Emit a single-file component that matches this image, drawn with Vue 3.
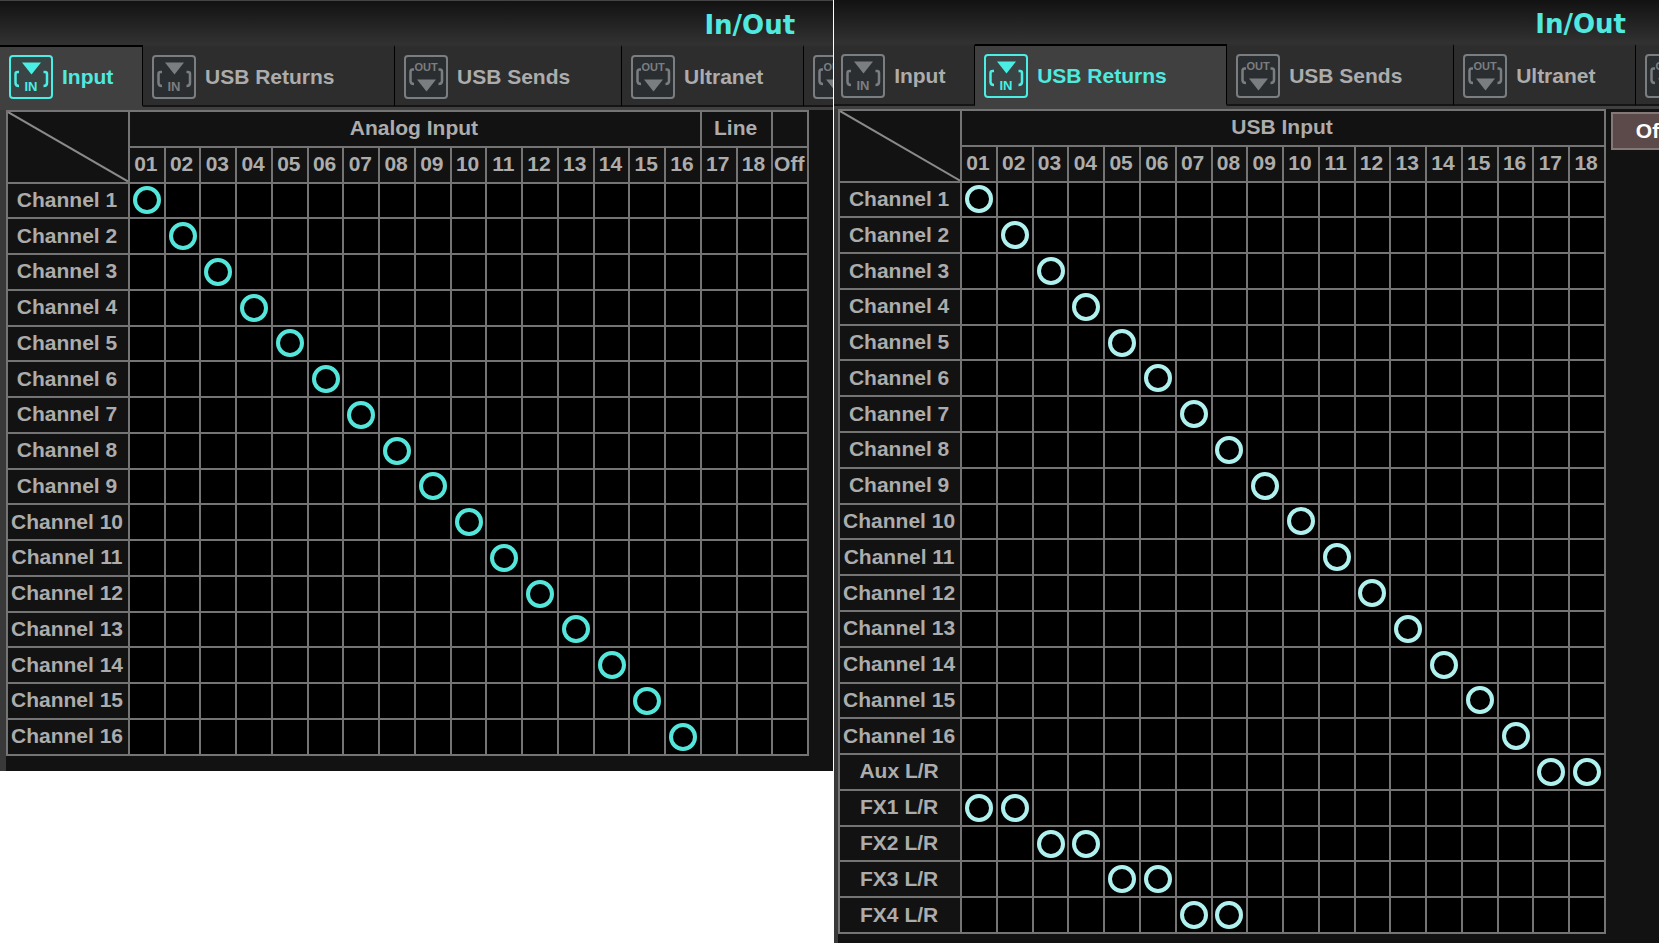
<template>
    <main class="page">
        <section v-for="panel in panels" :key="panel.id" :class="['panel', panel.id]" :aria-label="panel.name">
            <header class="panel-header">
                <h1>In/Out</h1>
            </header>

            <nav class="tabs" role="tablist" aria-label="In/Out pages">
                <button v-for="tab in tabs" :key="tab.id" type="button" role="tab"
                    :class="['tab', tab.id, { active: panel.activeTab === tab.id }]"
                    :aria-selected="panel.activeTab === tab.id" :aria-label="tab.name"
                    @click="panel.activeTab = tab.id">
                    <svg class="tab-icon" viewBox="0 0 44 44" aria-hidden="true">
                        <rect class="frame" x="1" y="1" width="42" height="42" rx="3" />
                        <template v-if="tab.dir === 'in'">
                            <path class="arrow" d="M13 7.5H32L22.5 19.5Z" />
                            <path class="bracket" d="M10 17H8.5Q6.5 17 6.5 19V28Q6.5 31 10 31M34.5 17H36Q38 17 38 19V28Q38 31 34.5 31" />
                            <text x="22" y="36" font-size="13">IN</text>
                        </template>
                        <template v-else>
                            <path class="arrow" d="M13 24.5H32L22.5 36.5Z" />
                            <path class="bracket" d="M10 14.5H8.5Q6.5 14.5 6.5 17V26Q6.5 29 10 29M34.5 14.5H36Q38 14.5 38 17V26Q38 29 34.5 29" />
                            <text x="22" y="16" font-size="11">OUT</text>
                        </template>
                    </svg>
                    <span>{{ tab.label }}</span>
                </button>
            </nav>

            <div class="panel-body">
                <table class="matrix" :style="{ '--cols': panel.cols.length }">
                    <thead>
                        <tr>
                            <td class="corner" rowspan="2">
                                <svg viewBox="0 0 100 100" preserveAspectRatio="none" aria-hidden="true">
                                    <line x1="0" y1="0" x2="100" y2="100" vector-effect="non-scaling-stroke" />
                                </svg>
                            </td>
                            <th v-for="(group, g) in panel.groups" :key="g" scope="colgroup" :colspan="group.span"
                                :style="{ gridColumn: `span ${group.span}` }">{{ group.label }}</th>
                        </tr>
                        <tr>
                            <th v-for="col in panel.cols" :key="col" scope="col">{{ col }}</th>
                        </tr>
                    </thead>
                    <tbody>
                        <tr v-for="(row, r) in panel.rows" :key="row">
                            <th scope="row">{{ row }}</th>
                            <td v-for="(col, c) in panel.cols" :key="col">
                                <button type="button" class="cell" :aria-label="`${row} to ${col}`"
                                    :aria-pressed="isOn(panel, r, c)" @click="toggle(panel, r, c)">
                                    <span v-if="isOn(panel, r, c)" class="ring"></span>
                                </button>
                            </td>
                        </tr>
                    </tbody>
                </table>
                <aside class="side">
                    <button v-if="panel.offButton" type="button" class="off-btn" @click="panel.routes = []">Off</button>
                </aside>
            </div>
        </section>
    </main>
</template>

<script setup>
import { ref } from 'vue';

const tabs = [
    { id: 'input', label: 'Input', name: 'Input', dir: 'in' },
    { id: 'usb-returns', label: 'USB Returns', name: 'USB Returns', dir: 'in' },
    { id: 'usb-sends', label: 'USB Sends', name: 'USB Sends', dir: 'out' },
    { id: 'ultranet', label: 'Ultranet', name: 'Ultranet', dir: 'out' },
    { id: 'more', label: '', name: 'More outputs', dir: 'out' },
];

const channels = Array.from({ length: 16 }, (_, i) => `Channel ${i + 1}`);
const numbers = Array.from({ length: 18 }, (_, i) => String(i + 1).padStart(2, '0'));

// routes are stored as "row-col"
const diagonal = channels.map((_, i) => `${i}-${i}`);

const panels = ref([
    {
        id: 'analog',
        name: 'Analog input routing',
        activeTab: 'input',
        groups: [
            { label: 'Analog Input', span: 16 },
            { label: 'Line', span: 2 },
            { label: '', span: 1 },
        ],
        cols: [...numbers, 'Off'],
        rows: channels,
        routes: [...diagonal],
        offButton: false,
    },
    {
        id: 'usb',
        name: 'USB input routing',
        activeTab: 'usb-returns',
        groups: [{ label: 'USB Input', span: 18 }],
        cols: numbers,
        rows: [...channels, 'Aux L/R', 'FX1 L/R', 'FX2 L/R', 'FX3 L/R', 'FX4 L/R'],
        routes: [
            ...diagonal,
            '16-16', '16-17',
            '17-0', '17-1',
            '18-2', '18-3',
            '19-4', '19-5',
            '20-6', '20-7',
        ],
        offButton: true,
    },
]);

function isOn(panel, r, c) {
    return panel.routes.includes(`${r}-${c}`);
}

function toggle(panel, r, c) {
    const key = `${r}-${c}`;
    if (isOn(panel, r, c)) {
        panel.routes = panel.routes.filter(k => k !== key);
    } else {
        panel.routes.push(key);
    }
}
</script>

<style>
body {
    margin: 0;
    background: #fff;
}
</style>

<style scoped>
.page {
    display: flex;
    align-items: flex-start;
    gap: 1px;
    padding-right: 7px;
    font-family: Arial, 'Liberation Sans', sans-serif;
    font-size: 21px;
    font-weight: bold;
    line-height: 24px;
    color: #acacac;
}

.panel {
    flex: 100 1 0;
    min-width: 0;
    overflow: hidden;
    background: #121212;
}

.panel.analog {
    flex-grow: 101;
    border-top: 1px solid #444;
}

.panel-header {
    display: flex;
    align-items: center;
    justify-content: flex-end;
    box-sizing: border-box;
    height: 44px;
    padding: 4px 38px 0;
    background: linear-gradient(#121212, #323232);
}

.usb .panel-header {
    padding-right: 33px;
}

.panel-header h1 {
    margin: 0;
    font-family: Verdana, 'DejaVu Sans', sans-serif;
    font-size: 26px;
    line-height: 32px;
    color: #51e9df;
}

/* Tabs */
.tabs {
    display: flex;
    height: 62px;
    border-bottom: 3px solid #404040;
    background: #2d2d2d;
}

.usb .tabs {
    margin-left: -2px;
}

.tab {
    display: flex;
    flex: none;
    align-items: center;
    gap: 9px;
    box-sizing: border-box;
    padding: 2px 8px 0 9px;
    border: 0;
    border-top: 2px solid #2f2f2f;
    border-right: 1px solid #000;
    border-bottom: 2px solid #151515;
    background: #2d2d2d;
    color: inherit;
    font: inherit;
    cursor: pointer;
}

.tab.input {
    width: 143px;
}

.tab.usb-returns {
    width: 252px;
}

.tab.usb-sends {
    width: 227px;
}

.tab.ultranet {
    width: 182px;
}

.tab.active {
    border-top-color: #000;
    border-bottom-color: #404040;
    background: #404040;
    color: #51e9df;
}

.tab-icon {
    flex: none;
    width: 44px;
    height: 44px;
    color: #7b7e81;
}

.active .tab-icon {
    color: #4beee4;
}

.frame {
    fill: #2b2e30;
    stroke: currentColor;
    stroke-width: 2;
}

.active .frame {
    fill: #3a4444;
}

.arrow {
    fill: currentColor;
}

.bracket {
    fill: none;
    stroke: currentColor;
    stroke-width: 2.5;
}

.tab-icon text {
    fill: currentColor;
    text-anchor: middle;
}

/* Routing matrix */
.panel-body {
    display: flex;
    align-items: flex-start;
    padding-bottom: 15px;
    border-left: 6px solid #393939;
}

.usb .panel-body {
    padding-bottom: 9px;
    border-left-width: 4px;
}

.matrix {
    display: grid;
    flex: 1;
    grid-template-columns: 120px repeat(var(--cols), minmax(0, 1fr));
    grid-auto-rows: 1fr;
    gap: 2px;
    min-width: 0;
    padding: 2px;
    background: #747474;
}

.matrix thead,
.matrix tbody,
.matrix tr {
    display: contents;
}

.matrix th {
    display: flex;
    align-items: center;
    justify-content: center;
    padding: 0 2px 1px 0;
    background: #121212;
    white-space: nowrap;
}

.matrix td {
    padding: 0;
    background: #000;
}

.matrix .corner {
    position: relative;
    grid-row: span 2;
    background: #121212;
}

.corner svg {
    position: absolute;
    inset: 0;
    width: 100%;
    height: 100%;
}

.corner line {
    stroke: #8a8a8a;
    stroke-width: 2;
}

.cell {
    display: flex;
    align-items: center;
    justify-content: center;
    width: 100%;
    aspect-ratio: 1;
    padding: 0;
    border: 0;
    background: none;
    cursor: pointer;
}

.ring {
    flex: none;
    box-sizing: border-box;
    width: 28px;
    height: 28px;
    border: 4px solid #55e6db;
    border-radius: 50%;
}

.usb .ring {
    border-color: #aff1ee;
}

.side {
    flex: none;
    width: 24px;
}

.usb .side {
    width: 53px;
}

.off-btn {
    width: 80px;
    height: 38px;
    margin: 3px 0 0 5px;
    padding: 0;
    border: 2px solid #857878;
    background: #5c4a4a;
    color: #fff;
    font: inherit;
    cursor: pointer;
}
</style>
